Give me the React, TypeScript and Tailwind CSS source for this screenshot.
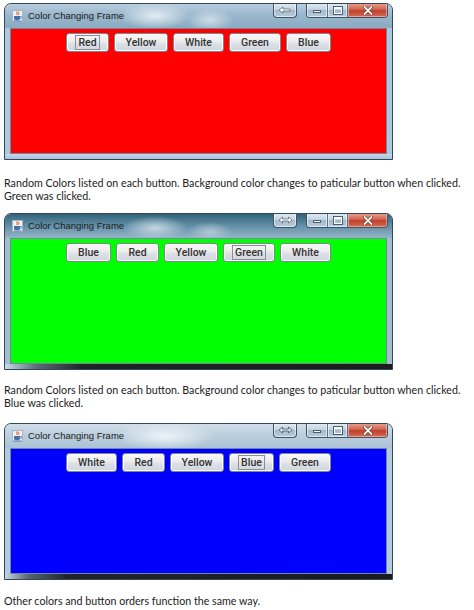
import React from "react";

type Frame = {
  fill: string;
  order: string[];
  focus: string;
  title: string;
  sides: string;
  bottom: string;
  arrow: "left" | "double" | "outline";
  top: string;
};

const BTN_W: Record<string, string> = {
  Red: "w-[43px]",
  Blue: "w-[45px]",
  Yellow: "w-[54px]",
  White: "w-[51px]",
  Green: "w-[52px]",
};

const FRAMES: Frame[] = [
  {
    fill: "bg-[#ff0000]",
    order: ["Red", "Yellow", "White", "Green", "Blue"],
    focus: "Red",
    title:
      "bg-[radial-gradient(ellipse_36px_13px_at_150px_12px,rgba(232,240,246,0.95),transparent),radial-gradient(ellipse_24px_12px_at_205px_16px,rgba(210,225,236,0.9),transparent),linear-gradient(#b9cedf,#9ab7cc_45%,#8aabc3)]",
    sides: "bg-[#aec8dc]",
    bottom: "bg-[linear-gradient(#c2d8ea,#a9c4da)]",
    arrow: "left",
    top: "mt-[3px]",
  },
  {
    fill: "bg-[#00ff00]",
    order: ["Blue", "Red", "Yellow", "Green", "White"],
    focus: "Green",
    title:
      "bg-[radial-gradient(ellipse_32px_12px_at_150px_14px,rgba(205,222,233,0.9),transparent),radial-gradient(ellipse_22px_10px_at_205px_18px,rgba(185,206,219,0.85),transparent),linear-gradient(#31627a,#5f8ca3_45%,#94b4c7)]",
    sides: "bg-[#a3bdd1]",
    bottom: "bg-[linear-gradient(90deg,#c9dcea,#5d6d7a_8%,#1f2327_20%,#1c1c1c)]",
    arrow: "double",
    top: "mt-[11px]",
  },
  {
    fill: "bg-[#0000ff]",
    order: ["White", "Red", "Yellow", "Blue", "Green"],
    focus: "Blue",
    title:
      "bg-[radial-gradient(ellipse_50px_14px_at_160px_12px,rgba(240,245,249,0.95),transparent),linear-gradient(#d0dee9,#bccfde_45%,#abc3d5)]",
    sides: "bg-[#b4cbde]",
    bottom: "bg-[linear-gradient(90deg,#c7dae8,#58646e_6%,#222528_16%,#1b1b1b)]",
    arrow: "outline",
    top: "mt-[14px]",
  },
];

function JavaIcon() {
  return (
    <svg width="11" height="12" viewBox="0 0 11 12">
      <rect x="0.5" y="0.5" width="10" height="11" fill="#eef2f5" stroke="#a7b5c2" />
      <path d="M5.2 1.4c-1.6 1.2 1.1 1.9-0.4 3.6M6.9 1.9c-1.1 1 0.8 1.4-0.3 2.7" stroke="#e24a16" strokeWidth="1" fill="none" />
      <path d="M2 6h6v2.2a2 2 0 0 1-2 2H4a2 2 0 0 1-2-2z" fill="#4470b0" />
      <path d="M8 6.5h0.9a0.9 0.9 0 0 1 0 1.8H7.9" stroke="#4470b0" fill="none" strokeWidth="0.8" />
      <path d="M1.4 10.9h8.2" stroke="#4470b0" strokeWidth="0.8" />
    </svg>
  );
}

function ArrowGlyph({ kind }: { kind: Frame["arrow"] }) {
  if (kind === "left") {
    return (
      <svg width="14" height="8" viewBox="0 0 14 8">
        <path d="M1 4l4-3v2h7v2H5v2z" fill="#ffffff" stroke="#4a5f72" strokeWidth="0.7" />
      </svg>
    );
  }
  if (kind === "double") {
    return (
      <svg width="15" height="8" viewBox="0 0 15 8">
        <path d="M1 4l3.5-3v2h6V1L14 4l-3.5 3V5h-6v2z" fill="#ffffff" stroke="#4a5f72" strokeWidth="0.7" />
      </svg>
    );
  }
  return (
    <svg width="15" height="8" viewBox="0 0 15 8">
      <path d="M1 4l3.5-3v2h6V1L14 4l-3.5 3V5h-6v2z" fill="#dfe8ef" stroke="#51677a" strokeWidth="0.9" />
    </svg>
  );
}

function Controls({ arrow }: { arrow: Frame["arrow"] }) {
  return (
    <div className="absolute right-[4px] top-[-1px] flex items-start gap-[9px]">
      <div className="flex h-[15px] w-[24px] items-center justify-center rounded-b-[4px] border border-t-0 border-[#3d5366] bg-[linear-gradient(#e4ecf2,#c2d3e0_48%,#a3bacb_52%,#b9ccdb)] shadow-[inset_0_0_0_1px_rgba(255,255,255,0.55)]">
        <ArrowGlyph kind={arrow} />
      </div>
      <div className="flex h-[15px] overflow-hidden rounded-b-[4px] border border-t-0 border-[#3d5366]">
        <div className="flex w-[21px] items-end justify-center border-r border-[#5b7286] bg-[linear-gradient(#e4ecf2,#c2d3e0_48%,#a3bacb_52%,#b9ccdb)] pb-[4px] shadow-[inset_0_0_0_1px_rgba(255,255,255,0.55)]">
          <div className="h-[3px] w-[8px] border border-[#4a5f72] bg-white" />
        </div>
        <div className="flex w-[20px] items-center justify-center border-r border-[#5b7286] bg-[linear-gradient(#e4ecf2,#c2d3e0_48%,#a3bacb_52%,#b9ccdb)] shadow-[inset_0_0_0_1px_rgba(255,255,255,0.55)]">
          <div className="h-[7px] w-[8px] border-[1.5px] border-white border-t-[2.5px] outline outline-1 outline-[#4a5f72]" />
        </div>
        <div className="flex w-[39px] items-center justify-center bg-[linear-gradient(#e9a597,#d2644f_45%,#c0412b_55%,#d46a55)] shadow-[inset_0_0_0_1px_rgba(255,220,210,0.5)]">
          <svg width="10" height="9" viewBox="0 0 10 9">
            <path d="M1.5 1l7 7M8.5 1l-7 7" stroke="#5a2218" strokeWidth="3" strokeLinecap="round" />
            <path d="M1.5 1l7 7M8.5 1l-7 7" stroke="#ffffff" strokeWidth="1.8" strokeLinecap="round" />
          </svg>
        </div>
      </div>
    </div>
  );
}

function ColorButton({ label, focused }: { label: string; focused: boolean }) {
  return (
    <div
      className={`${BTN_W[label]} flex h-[19px] items-center justify-center rounded-[3px] border border-[#80868d] bg-[linear-gradient(#f7f7f7,#ececec_45%,#dde1e6_55%,#cfd6de)] shadow-[inset_0_0_0_1px_rgba(255,255,255,0.8)]`}
    >
      <span
        className={`font-['Roboto',sans-serif] text-[10.5px] font-medium leading-[11px] text-[#333333] ${
          focused ? "border border-[#8a8f96] px-[2px] py-[1px]" : ""
        }`}
      >
        {label}
      </span>
    </div>
  );
}

function Window({ f }: { f: Frame }) {
  return (
    <div className={`${f.top} ml-[4px] w-[389px] overflow-hidden rounded-t-[7px] border border-[#33475a] ${f.sides}`}>
      <div className={`relative flex h-[24px] items-center gap-[5px] pl-[7px] ${f.title}`}>
        <JavaIcon />
        <span className="font-['Liberation_Sans',sans-serif] text-[9.5px] leading-none text-[#1a1a1a]">
          Color Changing Frame
        </span>
        <Controls arrow={f.arrow} />
      </div>
      <div className={`mx-[5px] h-[126px] border border-[#6f889d] ${f.fill}`}>
        <div className="flex justify-center gap-[5px] pt-[4px]">
          {f.order.map((c) => (
            <ColorButton key={c} label={c} focused={c === f.focus} />
          ))}
        </div>
      </div>
      <div className={`h-[5px] ${f.bottom}`} />
    </div>
  );
}

function Caption({ lines, top }: { lines: string[]; top: string }) {
  return (
    <div className={`${top} pl-[4px] font-['Lato',sans-serif] text-[10.7px] leading-[13px] text-[#1b1b1b]`}>
      {lines.map((l) => (
        <div key={l} className="whitespace-nowrap">
          {l}
        </div>
      ))}
    </div>
  );
}

export default function App() {
  const lead = "Random Colors listed on each button. Background color changes to paticular button when clicked.";
  return (
    <div className="h-[610px] w-[474px] overflow-hidden bg-white">
      <Window f={FRAMES[0]} />
      <Caption top="mt-[16px]" lines={[lead, "Green was clicked."]} />
      <Window f={FRAMES[1]} />
      <Caption top="mt-[13px]" lines={[lead, "Blue was clicked."]} />
      <Window f={FRAMES[2]} />
      <Caption top="mt-[14px]" lines={["Other colors and button orders function the same way."]} />
    </div>
  );
}
